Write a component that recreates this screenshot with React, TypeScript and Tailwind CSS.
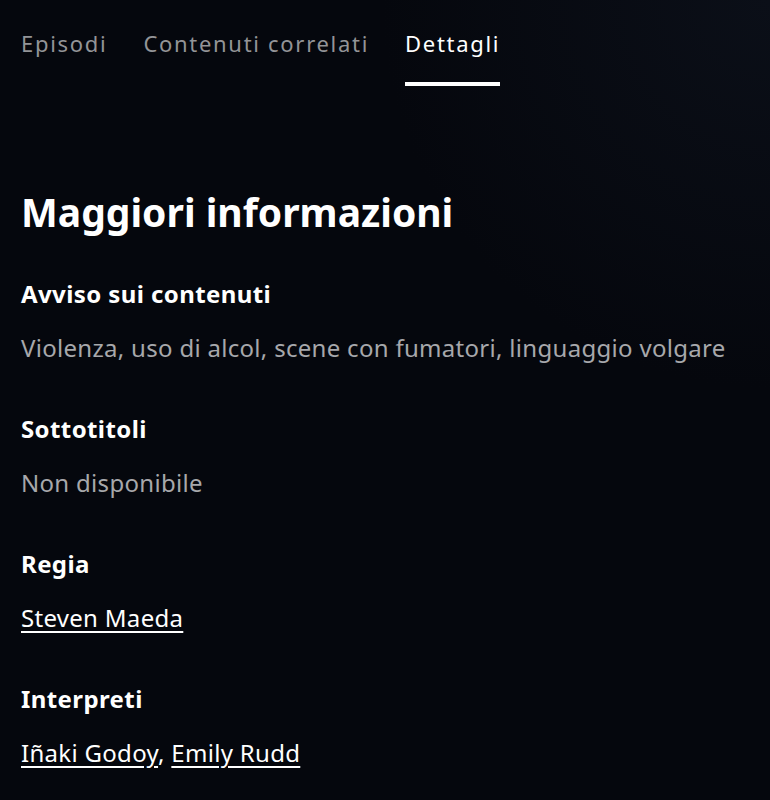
import React from "react";

const tabs = [
  { label: "Episodi", active: false },
  { label: "Contenuti correlati", active: false },
  { label: "Dettagli", active: true },
];

function Field({ label, children }: { label: string; children: React.ReactNode }) {
  return (
    <div className="flex flex-col gap-[26px]">
      <h3 className="text-[24px] leading-[28px] tracking-[0.4px] font-bold text-white">{label}</h3>
      <div className="text-[24px] leading-[28px] tracking-[0.3px] text-[#a7a8ab]">{children}</div>
    </div>
  );
}

export default function App() {
  return (
    <div className="min-h-[800px] w-full overflow-hidden bg-[#05070d] bg-[radial-gradient(circle_at_100%_0%,#0b0f18_0%,#05070d_35%)] font-['Noto_Sans',sans-serif] px-[21px]">
      {/* Tabs */}
      <nav className="flex gap-[36px] pt-[26px]">
        {tabs.map((t) => (
          <div key={t.label} className="flex flex-col">
            <span
              className={
                t.active
                  ? "text-[22px] leading-[34px] tracking-[1.7px] text-white"
                  : "text-[22px] leading-[34px] tracking-[1.7px] text-[#939497]"
              }
            >
              {t.label}
            </span>
            <div className={t.active ? "mt-[22px] h-[4px] bg-white" : "mt-[22px] h-[4px]"} />
          </div>
        ))}
      </nav>

      {/* Details */}
      <section className="pt-[102px]">
        <h2 className="text-[39px] leading-[48px] font-bold text-white">Maggiori informazioni</h2>
        <div className="mt-[44px] flex flex-col gap-[53px]">
          <Field label="Avviso sui contenuti">
            Violenza, uso di alcol, scene con fumatori, linguaggio volgare
          </Field>
          <Field label="Sottotitoli">Non disponibile</Field>
          <Field label="Regia">
            <a className="text-white underline underline-offset-[4px]" href="#">Steven Maeda</a>
          </Field>
          <Field label="Interpreti">
            <span className="text-white">
              <a className="underline underline-offset-[4px]" href="#">Iñaki Godoy</a>,{" "}
              <a className="underline underline-offset-[4px]" href="#">Emily Rudd</a>
            </span>
          </Field>
        </div>
      </section>
    </div>
  );
}
